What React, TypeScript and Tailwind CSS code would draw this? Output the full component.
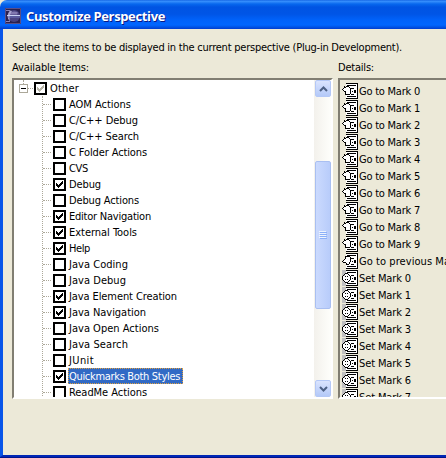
import { useLayoutEffect, useRef } from 'react';
import clsx from 'clsx';

// Text whose tracking is adjusted so that it spans a given width.
function Label({ text, w, mnemonic, className }: { text: string; w: number; mnemonic?: number; className?: string }) {
  const ref = useRef<HTMLSpanElement>(null);
  useLayoutEffect(() => {
    const el = ref.current;
    if (!el) return;
    el.style.letterSpacing = '0px';
    const natural = el.getBoundingClientRect().width;
    el.style.letterSpacing = `${(w - natural) / text.length}px`;
  }, [text, w]);
  return (
    <span ref={ref} className={clsx('inline-block whitespace-pre', className)}>
      {mnemonic === undefined ? text : (
        <>{text.slice(0, mnemonic)}<u className="underline-offset-1">{text[mnemonic]}</u>{text.slice(mnemonic + 1)}</>
      )}
    </span>
  );
}

const items: [string, boolean, number][] = [
  ['AOM Actions', false, 62],
  ['C/C++ Debug', false, 69],
  ['C/C++ Search', false, 70],
  ['C Folder Actions', false, 78],
  ['CVS', false, 19],
  ['Debug', true, 32],
  ['Debug Actions', false, 70],
  ['Editor Navigation', true, 82],
  ['External Tools', true, 68],
  ['Help', true, 21],
  ['Java Coding', false, 59],
  ['Java Debug', false, 57],
  ['Java Element Creation', true, 108],
  ['Java Navigation', true, 77],
  ['Java Open Actions', false, 90],
  ['Java Search', false, 59],
  ['JUnit', false, 25],
  ['Quickmarks Both Styles', true, 111],
  ['ReadMe Actions', false, 78],
];

const marks: [string, 'go' | 'prev' | 'set', number][] = [
  ...Array.from({ length: 10 }, (_, i): [string, 'go', number] => [`Go to Mark ${i}`, 'go', 61]),
  ['Go to previous Mark', 'prev', 101],
  ...Array.from({ length: 8 }, (_, i): [string, 'set', number] => [`Set Mark ${i}`, 'set', 52]),
];

function Check({ on, dim }: { on: boolean; dim?: boolean }) {
  return (
    <span className="block size-[13px] shrink-0 border-2 border-black bg-white">
      {on && (
        <svg viewBox="0 0 9 9" className={clsx('block size-[9px]', dim ? 'text-[#b8b5a8]' : 'text-black')} shapeRendering="crispEdges">
          <path fill="currentColor" d="M1 3h1v3h-1zM2 4h1v3h-1zM3 5h1v3h-1zM4 4h1v3h-1zM5 3h1v3h-1zM6 2h1v3h-1zM7 1h1v3h-1z" />
        </svg>
      )}
    </span>
  );
}

function MarkIcon({ kind }: { kind: 'go' | 'prev' | 'set' }) {
  return (
    <svg viewBox="0 0 16 16" className="block size-4 shrink-0" shapeRendering="crispEdges">
      {kind === 'set' && <path fill="#c0c0c0" d="M0 0h4v16H0z" />}
      <path fill="#fff" d="M4 0h12v16H4z" />
      <path fill="#000" d="M4 0h12v1H4zM15 0h1v16h-1zM4 15h12v1H4zM5 2h9v1H5zM5 13h9v1H5zM9 5h3v1H9zM9 11h3v1H9zM10 8h1v1h-1zM12 7h2v1h-2zM12 8h1v1h-1zM12 9h2v1h-2zM13 8h1v1h-1z" />
      {kind === 'go' && (
        <>
          <path fill="#fff" d="M2 4h5v2h2v5H4V8H1V6h1z" />
          <path fill="#000" d="M2 3h1v1H2zM4 3h3v1H4zM2 4h2v1H2zM1 5h1v1H1zM0 6h1v1H0zM1 7h1v1H1zM2 8h1v1H2zM3 8h1v3H3zM3 11h5v1H3zM7 4h1v1H7zM8 5h1v6H8z" />
        </>
      )}
      {kind === 'prev' && (
        <>
          <path fill="#fff" d="M3 4h5v5H7v2H5V9H2V7h1z" />
          <path fill="#000" d="M3 3h5v1H3zM3 4h1v2H3zM2 6h1v1H2zM1 7h1v1H1zM0 8h1v1H0zM1 9h3v1H1zM4 10h1v2H4zM5 11h2v1H5zM7 9h1v2H7zM8 4h1v5H8z" />
        </>
      )}
      {kind === 'set' && (
        <>
          <path fill="#fff" d="M3 4h4v1h1v6H7v1H3v-1H1V6h2z" />
          <path fill="#000" d="M3 3h3v1H3zM2 4h1v1H2zM6 4h1v1H6zM1 5h1v1H1zM7 5h1v1H7zM0 6h1v4H0zM8 6h1v4H8zM1 10h1v1H1zM7 10h1v1H7zM2 11h1v1H2zM6 11h1v1H6zM3 12h3v1H3zM3 6h1v1H3zM5 6h1v1H5zM3 9h1v1H3zM5 9h1v1H5z" />
        </>
      )}
    </svg>
  );
}

function ScrollButton({ up }: { up?: boolean }) {
  return (
    <div className="flex h-[17px] w-4 items-center justify-center rounded-[2px] border border-[#b4c8f6] bg-gradient-to-b from-[#dae4fe] to-[#b4c9f8]">
      <svg viewBox="0 0 9 6" className={clsx('h-1.5 w-[9px]', !up && 'rotate-180')} fill="none" stroke="#4d6185" strokeWidth="2">
        <path d="M1 5l3.500-3.500L8 5" />
      </svg>
    </div>
  );
}

export default function App() {
  return (
    <div className="h-[458px] w-[446px] overflow-hidden bg-[#ece9d8] font-['DejaVu_Sans_Condensed','DejaVu_Sans',sans-serif] text-[11px] leading-4 text-black [font-stretch:condensed]">
      <div className="flex h-full flex-col overflow-hidden rounded-tl-[7px] border-b border-[#00138c] bg-[#ece9d8]">
        <header className="flex h-[29px] shrink-0 items-center bg-[linear-gradient(180deg,#0958dc_0px,#3a93ff_1px,#2b85f8_2px,#0768ee_4px,#0054e3_7px,#0055e6_14px,#0062fa_20px,#0066ff_25px,#0054e6_27px,#003dd0_29px)] pl-[5px] pt-0.5 text-white">
          <svg viewBox="0 0 16 16" className="size-4 shrink-0">
            <rect width="16" height="16" fill="#2a2150" />
            <path d="M.5.5h15v15H.5z" fill="none" stroke="#5a4f86" />
            <circle cx="9" cy="8" r="6" fill="#4a4380" />
            <path d="M4.500 5.500Q8 2 13 4.500L12 6.500H5z" fill="#8279b0" />
            <path d="M5 2.500Q0 8 5 13.500Q3.500 8 7 3z" fill="#a9a3cf" />
            <path d="M1 2.500h4M1 13.500h4" stroke="#8d85b8" />
            <path d="M2 7.500h13" stroke="#c9d2f4" />
            <path d="M3 9h12" stroke="#6d74bb" />
          </svg>
          <Label text="Customize Perspective" w={139} className="ml-[5px] font-['Open_Sans','Noto_Sans',sans-serif] text-[13px] font-bold leading-[18px] [font-stretch:normal] [text-shadow:1px_1px_0_#0a1883]" />
        </header>
        <div className="flex min-h-0 grow flex-col border-b-2 border-l-[3px] border-b-[#0027b5] border-l-[#0855e9] pl-[9px] pt-[11px]">
          <Label text="Select the items to be displayed in the current perspective (Plug-in Development)." w={390} className="h-4 self-start" />
          <div className="mt-1 flex h-[18px]">
            <div className="w-[326px]"><Label text="Available Items:" mnemonic={10} w={77} /></div>
            <Label text="Details:" w={36} />
          </div>
          <div className="flex h-[321px] gap-[5px]">
            <section className="flex w-[321px] shrink-0 overflow-hidden border-2 border-b-white border-l-[#817e72] border-r-white border-t-[#817e72] bg-white">
              <div className="min-w-0 grow overflow-hidden">
                <div className="flex h-4 items-center pl-[5px]">
                  <div className="relative flex size-[9px] items-center justify-center border border-[#aca899]">
                    <span className="h-px w-[5px] bg-black" />
                    <span className="absolute -top-[5px] left-[3px] h-1 border-l border-dotted border-[#aca899]" />
                  </div>
                  <span className="mr-px w-[5px] border-t border-dotted border-[#aca899]" />
                  <Check on dim />
                  <Label text="Other" w={29} className="ml-[3px] pt-0.5" />
                </div>
                <div className="ml-7 border-l border-dotted border-[#aca899]">
                  {items.map(([text, on, w]) => {
                    const selected = text.startsWith('Quickmarks');
                    return (
                      <div key={text} className="flex h-4 items-center">
                        <span className="mr-0.5 w-2 border-t border-dotted border-[#aca899]" />
                        <Check on={on} />
                        <span className={clsx('ml-0.5 flex h-4 items-center px-px', selected && 'outline-dotted outline-1 -outline-offset-1 outline-[#e0a040] bg-[#316ac5] pr-[3px] text-white')}>
                          <Label text={text} w={w} className="pt-0.5" />
                        </span>
                      </div>
                    );
                  })}
                </div>
              </div>
              <div className="flex w-[17px] shrink-0 flex-col justify-between bg-gradient-to-r from-[#f3f1ec] to-[#fefefb] pl-px">
                <ScrollButton up />
                <div className="mt-16 flex h-[148px] w-4 flex-col items-center justify-center gap-px rounded-[2px] border border-[#a9bff1] bg-gradient-to-r from-[#cbdafe] to-[#b8ccfa]">
                  {[0, 1, 2, 3].map(i => <span key={i} className="h-px w-[7px] bg-[#8cb0f8] shadow-[-1px_-1px_0_#eef4fe]" />)}
                </div>
                <div className="grow" />
                <ScrollButton />
              </div>
            </section>
            <section className="min-w-0 grow overflow-hidden border-2 border-r-0 border-b-white border-l-[#817e72] border-t-[#817e72] pl-0.5 pt-[2px]">
              {marks.map(([text, kind, w]) => (
                <div key={text} className="flex h-[17px] items-center gap-px">
                  <MarkIcon kind={kind} />
                  <Label text={text} w={w} className="pt-0.5" />
                </div>
              ))}
            </section>
          </div>
        </div>
      </div>
    </div>
  );
}
